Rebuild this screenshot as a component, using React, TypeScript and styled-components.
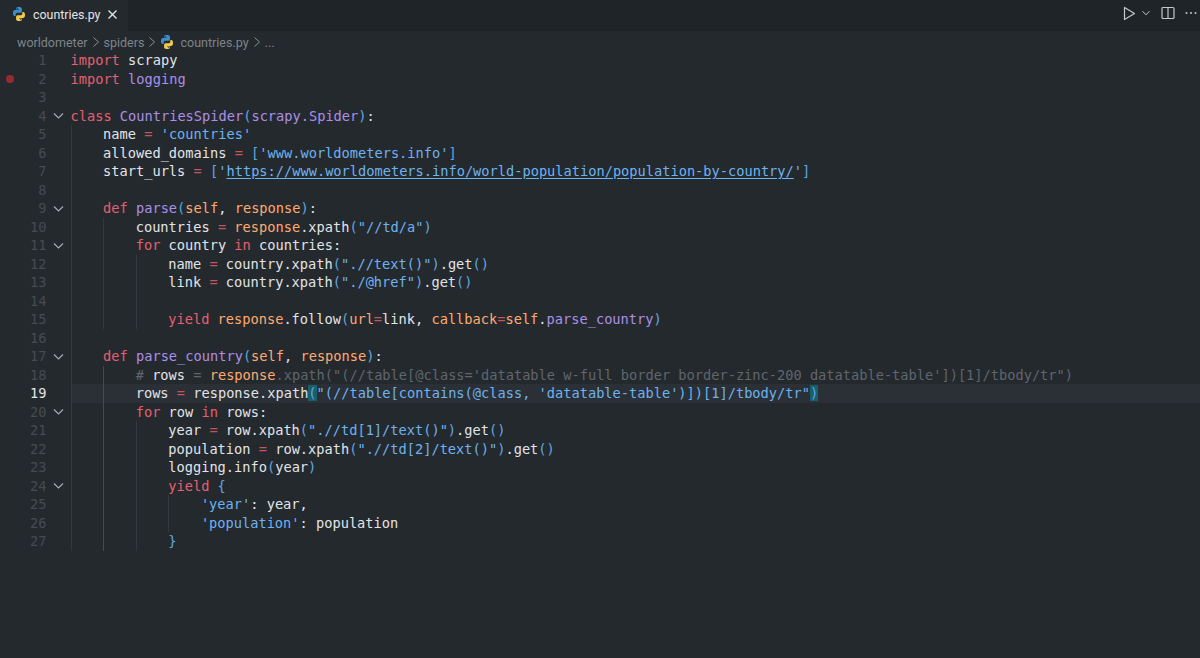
import { createGlobalStyle, styled } from "styled-components";

const GlobalStyle = createGlobalStyle`
  html, body {
    margin: 0;
    height: 100%;
    background: #24292e;
    overflow: hidden;
  }
`;

const Page = styled.div`
  width: 1200px;
  height: 658px;
  display: flex;
  flex-direction: column;
  background: #24292e;
  font-family: Roboto, "Noto Sans", sans-serif;
`;

const TabBar = styled.div`
  height: 31px;
  display: flex;
  align-items: stretch;
  justify-content: space-between;
  background: #1f2428;
`;

const Tab = styled.div`
  width: 128px;
  display: flex;
  align-items: center;
  padding: 0 0 3px 12px;
  box-sizing: border-box;
  gap: 7px;
  background: #24292e;
  color: #e1e4e8;
  font-size: 12.4px;
`;

const CloseMark = styled.svg`
  width: 11px;
  height: 11px;
  flex: none;
`;

const Actions = styled.div`
  display: flex;
  align-items: center;
  padding: 0 2px 5px 0;
  color: #c4c9ce;
`;

const ActionIcon = styled.svg<{ $gap?: number }>`
  margin-left: ${(p) => p.$gap ?? 0}px;
`;

const Crumbs = styled.div`
  height: 20px;
  display: flex;
  align-items: center;
  padding: 2px 0 0 17px;
  box-sizing: border-box;
  gap: 3px;
  color: #7d848b;
  font-size: 12.5px;
`;

const Sep = styled.span`
  display: flex;
  color: #8b9299;
`;

const Editor = styled.div`
  display: flex;
  flex-direction: column;
  font-family: "DejaVu Sans Mono", monospace;
  font-size: 13.66px;
  line-height: 18.5px;
  color: #e1e4e8;
`;

const Row = styled.div`
  height: 18.5px;
  display: flex;
  align-items: stretch;
`;

const Glyph = styled.div`
  width: 17px;
  display: flex;
  align-items: center;
  justify-content: center;
  padding-left: 3px;
  box-sizing: border-box;
`;

const Dot = styled.span`
  width: 8px;
  height: 8px;
  border-radius: 50%;
  background: #962a30;
`;

const LineNo = styled.div<{ $active: boolean }>`
  width: 29.5px;
  text-align: right;
  color: ${(p) => (p.$active ? "#e1e4e8" : "#444b52")};
`;

const Fold = styled.div`
  width: 24px;
  display: flex;
  align-items: center;
  justify-content: center;
  color: #a4aab0;
`;

const Code = styled.div<{ $active: boolean }>`
  flex: 1;
  display: flex;
  white-space: pre;
  background: ${(p) => (p.$active ? "#2b3036" : "transparent")};
`;

const Guide = styled.span<{ $bright: boolean }>`
  width: 32.6px;
  flex: none;
  box-sizing: border-box;
  border-left: 1px solid ${(p) => (p.$bright ? "#454b51" : "#32383d")};
`;

const colors = {
  k: "#e5606e",
  o: "#c2555f",
  f: "#ab8fe8",
  s: "#6db3ef",
  v: "#ffab70",
  b: "#5fa8e0",
  c: "#5f666d",
  t: "#e1e4e8",
};

type Kind = keyof typeof colors;

const Tok = styled.span<{ $kind: Kind; $match?: boolean; $link?: boolean }>`
  color: ${(p) => colors[p.$kind]};
  ${(p) => (p.$match ? "background: #17606c;" : "")}
  ${(p) => (p.$link ? "text-decoration: underline; text-underline-offset: 2px;" : "")}
`;

type Part = [Kind, string] | [Kind, string, "match" | "link"];
type Line = { guides: number; fold?: boolean; parts: Part[] };

const lines: Line[] = [
  { guides: 0, parts: [["k", "import"], ["t", " scrapy"]] },
  { guides: 0, parts: [["k", "import"], ["f", " logging"]] },
  { guides: 0, parts: [] },
  { guides: 0, fold: true, parts: [["k", "class"], ["f", " CountriesSpider"], ["b", "("], ["f", "scrapy.Spider"], ["b", ")"], ["t", ":"]] },
  { guides: 1, parts: [["t", "name "], ["o", "="], ["s", " 'countries'"]] },
  { guides: 1, parts: [["t", "allowed_domains "], ["o", "="], ["b", " ["], ["s", "'www.worldometers.info'"], ["b", "]"]] },
  { guides: 1, parts: [["t", "start_urls "], ["o", "="], ["b", " ["], ["s", "'"], ["s", "https://www.worldometers.info/world-population/population-by-country/", "link"], ["s", "'"], ["b", "]"]] },
  { guides: 1, parts: [] },
  { guides: 1, fold: true, parts: [["k", "def"], ["f", " parse"], ["b", "("], ["v", "self"], ["t", ", "], ["v", "response"], ["b", ")"], ["t", ":"]] },
  { guides: 2, parts: [["t", "countries "], ["o", "="], ["v", " response"], ["t", ".xpath"], ["b", "("], ["s", '"//td/a"'], ["b", ")"]] },
  { guides: 2, fold: true, parts: [["k", "for"], ["t", " country "], ["k", "in"], ["t", " countries:"]] },
  { guides: 3, parts: [["t", "name "], ["o", "="], ["t", " country.xpath"], ["b", "("], ["s", '".//text()"'], ["b", ")"], ["t", ".get"], ["b", "()"]] },
  { guides: 3, parts: [["t", "link "], ["o", "="], ["t", " country.xpath"], ["b", "("], ["s", '"./@href"'], ["b", ")"], ["t", ".get"], ["b", "()"]] },
  { guides: 3, parts: [] },
  { guides: 3, parts: [["k", "yield"], ["v", " response"], ["t", ".follow"], ["b", "("], ["v", "url"], ["o", "="], ["t", "link, "], ["v", "callback"], ["o", "="], ["v", "self"], ["t", "."], ["f", "parse_country"], ["b", ")"]] },
  { guides: 1, parts: [] },
  { guides: 1, fold: true, parts: [["k", "def"], ["f", " parse_country"], ["b", "("], ["v", "self"], ["t", ", "], ["v", "response"], ["b", ")"], ["t", ":"]] },
  { guides: 2, parts: [["c", "# "], ["t", "rows"], ["c", " = "], ["v", "response"], ["c", ".xpath(\"(//table[@class='datatable w-full border border-zinc-200 datatable-table'])[1]/tbody/tr\")"]] },
  { guides: 2, parts: [["t", "rows "], ["o", "="], ["t", " response.xpath"], ["b", "(", "match"], ["s", "\"(//table[contains(@class, 'datatable-table')])[1]/tbody/tr\""], ["b", ")", "match"]] },
  { guides: 2, fold: true, parts: [["k", "for"], ["t", " row "], ["k", "in"], ["t", " rows:"]] },
  { guides: 3, parts: [["t", "year "], ["o", "="], ["t", " row.xpath"], ["b", "("], ["s", '".//td[1]/text()"'], ["b", ")"], ["t", ".get"], ["b", "()"]] },
  { guides: 3, parts: [["t", "population "], ["o", "="], ["t", " row.xpath"], ["b", "("], ["s", '".//td[2]/text()"'], ["b", ")"], ["t", ".get"], ["b", "()"]] },
  { guides: 3, parts: [["t", "logging.info"], ["b", "("], ["t", "year"], ["b", ")"]] },
  { guides: 3, fold: true, parts: [["k", "yield"], ["b", " {"]] },
  { guides: 4, parts: [["s", "'year'"], ["t", ": year,"]] },
  { guides: 4, parts: [["s", "'population'"], ["t", ": population"]] },
  { guides: 3, parts: [["b", "}"]] },
];

const PythonIcon = ({ size = 14 }: { size?: number }) => {
  const half = "M7.9 1C5 1 5.2 2.3 5.2 2.3v1.3H8V4H4S2 3.8 2 6.9s1.7 3 1.7 3h1V8.5s-.1-1.7 1.7-1.7h2.9s1.6 0 1.6-1.6V2.6S10.7 1 7.9 1zM6.3 1.9a.5.5 0 1 1 0 1 .5.5 0 0 1 0-1z";
  return (
    <svg width={size} height={size} viewBox="1.5 1 13 14">
      <path d={half} fill="#3d8fc9" fillRule="evenodd" />
      <path d={half} fill="#f2c94c" fillRule="evenodd" transform="rotate(180 8 8)" />
    </svg>
  );
};

const Chevron = () => (
  <svg width="11" height="11" viewBox="0 0 11 11" fill="none" stroke="currentColor" strokeWidth="1.2">
    <path d="M1 3.5 5.5 8 10 3.5" />
  </svg>
);

const CrumbSep = () => (
  <Sep>
    <svg width="10" height="12" viewBox="0 0 10 12" fill="none" stroke="currentColor" strokeWidth="1">
      <path d="M2.5 1.5 7.5 6 2.5 10.5" />
    </svg>
  </Sep>
);

const App = () => {
  return (
    <Page>
      <GlobalStyle />
      <TabBar>
        <Tab>
          <PythonIcon />
          <span>countries.py</span>
          <CloseMark viewBox="0 0 11 11" fill="none" stroke="#e1e4e8" strokeWidth="1.4">
            <path d="M1.5 1.5 9.5 9.5M9.5 1.5 1.5 9.5" />
          </CloseMark>
        </Tab>
        <Actions>
          <ActionIcon width="14" height="15" viewBox="0 0 14 15" fill="none" stroke="currentColor" strokeWidth="1.2">
            <path d="M2.5 1.5v12L12.5 7.5z" strokeLinejoin="round" />
          </ActionIcon>
          <ActionIcon $gap={5} width="10" height="10" viewBox="0 0 10 10" fill="none" stroke="currentColor" strokeWidth="1">
            <path d="M1.5 3.2 5 6.8 8.5 3.2" />
          </ActionIcon>
          <ActionIcon $gap={10} width="14" height="14" viewBox="0 0 14 14" fill="none" stroke="currentColor" strokeWidth="1.2">
            <rect x="1" y="1.5" width="12" height="11" rx="1" />
            <path d="M7 1.5v11" />
          </ActionIcon>
          <ActionIcon $gap={9} width="14" height="14" viewBox="0 0 14 14" fill="currentColor">
            <circle cx="2.5" cy="7" r="1" />
            <circle cx="7" cy="7" r="1" />
            <circle cx="11.5" cy="7" r="1" />
          </ActionIcon>
        </Actions>
      </TabBar>
      <Crumbs>
        <span>worldometer</span>
        <CrumbSep />
        <span>spiders</span>
        <CrumbSep />
        <PythonIcon />
        <span>&nbsp;countries.py</span>
        <CrumbSep />
        <span>...</span>
      </Crumbs>
      <Editor>
        {lines.map((line, i) => (
          <Row key={i}>
            <Glyph>{i === 1 && <Dot />}</Glyph>
            <LineNo $active={i === 18}>{i + 1}</LineNo>
            <Fold>{line.fold && <Chevron />}</Fold>
            <Code $active={i === 18}>
              {Array.from({ length: line.guides }, (_, g) => (
                <Guide key={g} $bright={g === 1 && i >= 17} />
              ))}
              <span>
                {line.parts.map(([kind, text, mark], j) => (
                  <Tok key={j} $kind={kind} $match={mark === "match"} $link={mark === "link"}>
                    {text}
                  </Tok>
                ))}
              </span>
            </Code>
          </Row>
        ))}
      </Editor>
    </Page>
  );
};

export default App;
